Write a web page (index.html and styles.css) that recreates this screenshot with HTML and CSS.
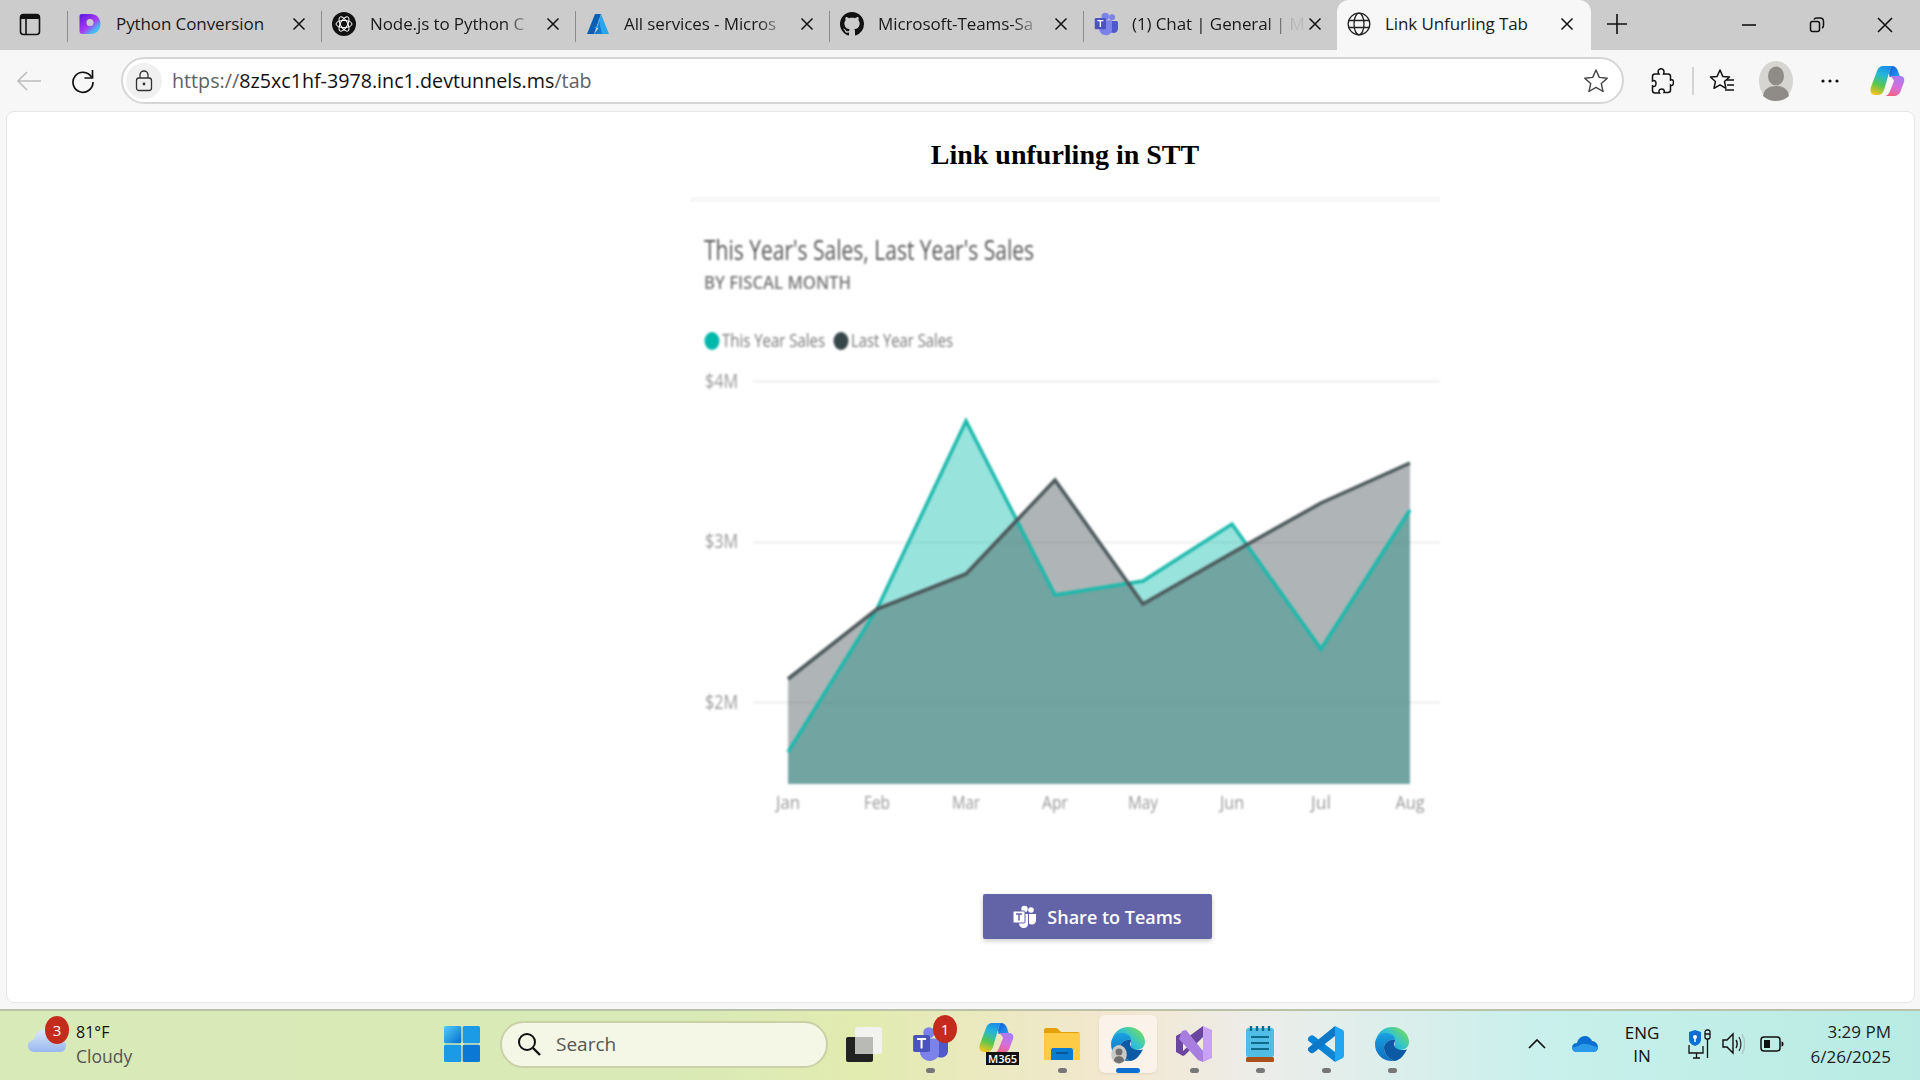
FILE: index.html
```html
<!doctype html>
<html lang="en">
<head>
  <meta charset="utf-8">
  <title>Link Unfurling Tab</title>
  <link rel="stylesheet" href="styles.css">
</head>
<body>
<svg class="sprite" width="0" height="0">
  <defs>
    <linearGradient id="edgeTop" x1="0" y1="1" x2="1" y2="0.3"><stop offset="0" stop-color="#0f8fd8"/><stop offset="0.6" stop-color="#33c3d0"/><stop offset="1" stop-color="#6fdc62"/></linearGradient>
    <linearGradient id="edgeBody" x1="0" y1="0" x2="0" y2="1"><stop offset="0" stop-color="#1a9fe0"/><stop offset="1" stop-color="#0c6fc0"/></linearGradient>
    <linearGradient id="copA" x1="0.6" y1="0" x2="0.3" y2="1"><stop offset="0" stop-color="#1c8fe8"/><stop offset="0.3" stop-color="#25b8d8"/><stop offset="0.65" stop-color="#56c650"/><stop offset="1" stop-color="#f0c420"/></linearGradient>
    <linearGradient id="copB" x1="0.8" y1="0" x2="0.3" y2="1"><stop offset="0" stop-color="#a77cf5"/><stop offset="0.55" stop-color="#d86ed8"/><stop offset="1" stop-color="#f2607a"/></linearGradient>
    <linearGradient id="copC" x1="0" y1="0" x2="1" y2="1"><stop offset="0" stop-color="#0e5fd8"/><stop offset="1" stop-color="#2a9cf0"/></linearGradient>
    <linearGradient id="winBlue" x1="0" y1="0" x2="1" y2="1"><stop offset="0" stop-color="#54cbfa"/><stop offset="1" stop-color="#0070cc"/></linearGradient>
    <symbol id="close" viewBox="0 0 14 14"><path d="M1.500 1.500l11 11M12.500 1.500l-11 11" fill="none" stroke="#111" stroke-width="1.500"/></symbol>
    <symbol id="edge" viewBox="0 0 36 36">
      <path d="M2 13C5 5 11 1 18 1c10 0 17 7 17 15 0 5-4 8-9 8-3 0-6-1-6-3 0-1 1-2 1-4 0-5-4-8-9-8-4 0-8 1-10 4z" fill="url(#edgeTop)"/>
      <path d="M1 18C1 11 7 7 12 7c5 0 9 3 9 7-5-1-11 2-11 8 0 6 5 11 10 13C9 36 1 28 1 18z" fill="url(#edgeBody)"/>
      <path d="M10 22c0-6 6-9 11-8 0 2-1 3-1 4 0 4 4 6 9 6 2 0 3-.4 4-1-3 7-8 12-13 12-5-2-10-7-10-13z" fill="#0c59a4"/>
    </symbol>
    <symbol id="copilot" viewBox="0 0 36 32">
      <path d="M24 1h-9C11 1 9 3 8 6L2 22c-1.500 4 0 8 4 8h3c3 0 5-2 6-5L20 8c1-4 2-7 4-7z" fill="url(#copA)"/>
      <path d="M23 1c3 0 5 2 6 5l2 6h-10.500L20 8c1-4 2-7 3-7z" fill="url(#copC)"/>
      <path d="M21 11h10c3 0 5 2 4 6l-3 8c-1 4-4 6-7 6H15c3 0 5-2 6-5l4-10c-1-2-2-4-4-5z" fill="url(#copB)"/>
    </symbol>
    <symbol id="teams" viewBox="0 0 32 32">
      <circle cx="24" cy="7" r="4" fill="#7b83eb"/>
      <path d="M19 12h11c1 0 2 1 2 2v8c0 4-3 6-6 6-2 0-5-1-7-3z" fill="#5059c9"/>
      <circle cx="15" cy="6" r="5" fill="#7b83eb"/>
      <path d="M7 11h16c1 0 1 1 1 2v11c0 4-4 7-8 7-5 0-9-4-9-8z" fill="#7b83eb"/>
      <rect x="1" y="8" width="15" height="15" rx="1.500" fill="#4b53bc"/>
      <path d="M4.500 11.500h8M8.500 11.500v8.500" stroke="#fff" stroke-width="1.800" fill="none"/>
    </symbol>
  </defs>
</svg>

<!-- browser tab strip -->
<div class="tabstrip">
  <div class="sidebar-btn">
    <svg width="24" height="24" viewBox="0 0 24 24"><rect x="2.500" y="2.500" width="19" height="20" rx="3" fill="none" stroke="#111" stroke-width="1.600"/><path d="M2.500 7h19v-2c0-2-1-2.500-3-2.500h-13c-2 0-3 .5-3 2.500z" fill="#111"/><path d="M8 7v15" stroke="#111" stroke-width="1.600"/></svg>
  </div>
  <div class="tab">
    <svg class="favicon" viewBox="-1.500 -2 24 24"><defs><linearGradient id="perp" x1="0" y1="0" x2="0.9" y2="1"><stop offset="0" stop-color="#5a14e0"/><stop offset="0.55" stop-color="#a63cf2"/><stop offset="0.8" stop-color="#4fb4f2"/><stop offset="1" stop-color="#35d0e8"/></linearGradient></defs><path fill-rule="evenodd" d="M2 0h9c6 0 10 4 10 10s-4 10-10 10H3c-2 0-3-1-3-3V2c0-1 1-2 2-2zM10.500 5a3.500 3.500 0 1 0 0 7 3.500 3.500 0 0 0 0-7z" fill="url(#perp)"/></svg>
    <span class="tab-title">Python Conversion</span>
    <svg class="tab-close"><use href="#close"/></svg>
  </div>
  <div class="tab">
    <svg class="favicon" viewBox="0 0 24 24"><circle cx="12" cy="12" r="12" fill="#111"/><g fill="none" stroke="#fff" stroke-width="1"><ellipse cx="12" cy="12" rx="8" ry="3.600"/><ellipse cx="12" cy="12" rx="8" ry="3.600" transform="rotate(60 12 12)"/><ellipse cx="12" cy="12" rx="8" ry="3.600" transform="rotate(120 12 12)"/></g></svg>
    <span class="tab-title fade">Node.js to Python C</span>
    <svg class="tab-close"><use href="#close"/></svg>
  </div>
  <div class="tab">
    <svg class="favicon" viewBox="0 0 24 24"><path d="M9 2h6L8 22H1z" fill="#0a5fb4"/><path d="M15 2l8 20h-7l-4-6h-4l4-3z" fill="#2aa4ec"/><path d="M13 9l3 13h-8l4-5z" fill="#1278d0"/></svg>
    <span class="tab-title fade">All services - Micros</span>
    <svg class="tab-close"><use href="#close"/></svg>
  </div>
  <div class="tab">
    <svg class="favicon" viewBox="0 0 16 16"><path fill="#111" d="M8 0C3.580 0 0 3.580 0 8c0 3.540 2.290 6.530 5.470 7.590.4.070.55-.17.55-.38 0-.19-.01-.82-.01-1.490-2.010.37-2.530-.49-2.690-.94-.09-.23-.48-.94-.82-1.130-.28-.15-.68-.52-.01-.53.63-.01 1.080.58 1.230.82.72 1.210 1.870.87 2.330.66.07-.52.28-.87.51-1.070-1.780-.2-3.640-.89-3.640-3.950 0-.87.31-1.590.82-2.150-.08-.2-.36-1.020.08-2.120 0 0 .67-.21 2.200.82.64-.18 1.320-.27 2-.27.68 0 1.360.09 2 .27 1.530-1.040 2.200-.82 2.200-.82.44 1.100.16 1.920.08 2.120.51.56.82 1.270.82 2.150 0 3.070-1.870 3.750-3.650 3.950.29.25.54.73.54 1.480 0 1.070-.01 1.930-.01 2.200 0 .21.15.46.55.38A8.013 8.013 0 0016 8c0-4.420-3.580-8-8-8z"/></svg>
    <span class="tab-title fade">Microsoft-Teams-Sa</span>
    <svg class="tab-close"><use href="#close"/></svg>
  </div>
  <div class="tab">
    <svg class="favicon"><use href="#teams"/></svg>
    <span class="tab-title fade">(1) Chat | General | M</span>
    <svg class="tab-close"><use href="#close"/></svg>
  </div>
  <div class="tab active">
    <svg class="favicon" viewBox="0 0 24 24"><g fill="none" stroke="#222" stroke-width="1.300"><circle cx="12" cy="12" r="10.800"/><ellipse cx="12" cy="12" rx="5" ry="10.800"/><path d="M1.500 8.500h21M1.500 15.500h21"/></g></svg>
    <span class="tab-title">Link Unfurling Tab</span>
    <svg class="tab-close"><use href="#close"/></svg>
  </div>
  <div class="newtab">
    <svg width="22" height="22" viewBox="0 0 22 22"><path d="M11 1v20M1 11h20" stroke="#111" stroke-width="1.600"/></svg>
  </div>
  <div class="winctl">
    <span><svg width="16" height="16" viewBox="0 0 16 16"><path d="M1 8h14" stroke="#111" stroke-width="1.600"/></svg></span>
    <span><svg width="16" height="16" viewBox="0 0 16 16"><rect x="1.500" y="4.500" width="9" height="10" rx="2" fill="none" stroke="#111" stroke-width="1.500"/><path d="M5 2.500c.5-1 1-1.500 2.500-1.500h3.500c2 0 3.500 1.500 3.500 3.500v4c0 1.500-.5 2-1.500 2.500" fill="none" stroke="#111" stroke-width="1.500"/></svg></span>
    <span><svg width="16" height="16" viewBox="0 0 16 16"><path d="M1 1l14 14M15 1L1 15" stroke="#111" stroke-width="1.600"/></svg></span>
  </div>
</div>

<!-- address bar row -->
<div class="toolbar">
  <div class="tool back">
    <svg width="26" height="22" viewBox="0 0 26 22"><path d="M25 11H2M11 2l-9 9 9 9" fill="none" stroke="#bdbdbd" stroke-width="1.600"/></svg>
  </div>
  <div class="tool reload">
    <svg width="26" height="26" viewBox="0 0 26 26"><path d="M21.500 9A10 10 0 1 0 23 14" fill="none" stroke="#111" stroke-width="1.700"/><path d="M22.500 2v8h-8" fill="none" stroke="#111" stroke-width="1.700"/></svg>
  </div>
  <div class="address">
    <span class="lock-pill">
      <svg width="18" height="22" viewBox="0 0 18 22"><rect x="1.500" y="8" width="15" height="12.500" rx="2.500" fill="none" stroke="#333" stroke-width="1.300"/><path d="M5 8V5c0-2.500 2-4 4-4s4 1.500 4 4v3" fill="none" stroke="#333" stroke-width="1.300"/><circle cx="9" cy="14" r="1.400" fill="#333"/></svg>
    </span>
    <span class="url"><span class="url-dim">https://</span>8z5xc1hf-3978.inc1.devtunnels.ms<span class="url-dim">/tab</span></span>
    <svg class="addr-star" width="26" height="26" viewBox="0 0 26 26"><path d="M13 2l3.300 7.400 8 .8-6 5.400 1.700 7.900-7-4.100-7 4.100 1.700-7.900-6-5.400 8-.8z" fill="none" stroke="#444" stroke-width="1.400" stroke-linejoin="round"/></svg>
  </div>
  <div class="tools">
    <div class="tool">
      <svg width="24" height="28" viewBox="0 0 24 28"><path d="M9 2.500c2-1.500 5-.5 5 2 0 1 0 1.500-.5 2.500H18c1.500 0 2.500 1 2.500 2.500V13c1.500-.8 3-.3 3 2.500s-1.500 3.500-3 2.500v5c0 1.500-1 2.500-2.500 2.500h-4c.7-2 0-3.500-2.500-3.500S8.500 24 9.500 26H5c-1.500 0-2.500-1-2.500-2.500V19c2 1 3.500 0 3.500-2.500S4.500 13 2.500 14V9.500C2.500 8 3.500 7 5 7h4c-1-1.500-1-3.500 0-4.500z" fill="none" stroke="#111" stroke-width="1.500"/></svg>
    </div>
    <i class="tool-sep"></i>
    <div class="tool favs">
      <svg width="26" height="26" viewBox="0 0 26 26"><path d="M11 2l2.800 6.400 6.700.6-5 4.500 1.400 6.800-5.900-3.500L5 20.300l1.400-6.800-5-4.500 6.700-.6z" fill="none" stroke="#111" stroke-width="1.500" stroke-linejoin="round"/><path d="M17 12h8M18 17h7M16 22h9" stroke="#111" stroke-width="1.500"/></svg>
    </div>
    <div class="tool">
      <svg width="34" height="40" viewBox="0 0 34 40"><ellipse cx="17" cy="20" rx="17" ry="20" fill="#d6d5d1"/><ellipse cx="17" cy="15" rx="8" ry="9.500" fill="#8f8c87"/><path d="M4 35c1-7 6-10 13-10s12 3 13 10c-3 3-8 5-13 5s-10-2-13-5z" fill="#8f8c87"/></svg>
    </div>
    <div class="tool">
      <svg width="20" height="6" viewBox="0 0 20 6"><circle cx="3" cy="3" r="1.600" fill="#111"/><circle cx="10" cy="3" r="1.600" fill="#111"/><circle cx="17" cy="3" r="1.600" fill="#111"/></svg>
    </div>
    <div class="tool copilot-btn">
      <svg width="36" height="32"><use href="#copilot"/></svg>
    </div>
  </div>
</div>

<main class="page">
  <div class="content">
    <h1>Link unfurling in STT</h1>
    <hr class="divider">
    <svg class="chart" width="750" height="610" viewBox="690 205 750 610">
      <text class="chart-title" x="704" y="260" textLength="330" lengthAdjust="spacingAndGlyphs">This Year's Sales, Last Year's Sales</text>
      <text class="chart-sub" x="704" y="289" textLength="147" lengthAdjust="spacingAndGlyphs">BY FISCAL MONTH</text>

      <ellipse cx="712" cy="341" rx="7.500" ry="9" fill="#01b8aa"/>
      <text class="chart-legend" x="722" y="347" textLength="103" lengthAdjust="spacingAndGlyphs">This Year Sales</text>
      <ellipse cx="841" cy="341" rx="7.500" ry="9" fill="#374649"/>
      <text class="chart-legend" x="851" y="347" textLength="102" lengthAdjust="spacingAndGlyphs">Last Year Sales</text>

      <path class="gridline" d="M753 381.500H1440M753 542.500H1440M753 702.500H1440"/>
      <text class="chart-axis" x="705" y="388" textLength="33" lengthAdjust="spacingAndGlyphs">$4M</text>
      <text class="chart-axis" x="705" y="548" textLength="33" lengthAdjust="spacingAndGlyphs">$3M</text>
      <text class="chart-axis" x="705" y="709" textLength="33" lengthAdjust="spacingAndGlyphs">$2M</text>

      <polygon class="area-teal" points="788,752 877,609 966,421 1055,595 1143,581 1232,524 1321,649 1410,510 1410,784 788,784"/>
      <polygon class="area-dark" points="788,679 877,609 966,574 1055,480 1143,604 1232,553 1321,503 1410,463 1410,784 788,784"/>
      <polyline class="line-teal" points="788,752 877,609 966,421 1055,595 1143,581 1232,524 1321,649 1410,510"/>
      <polyline class="line-dark" points="788,679 877,609 966,574 1055,480 1143,604 1232,553 1321,503 1410,463"/>

      <g class="chart-months">
        <text x="788" y="809" textLength="24" lengthAdjust="spacingAndGlyphs">Jan</text>
        <text x="877" y="809" textLength="26" lengthAdjust="spacingAndGlyphs">Feb</text>
        <text x="966" y="809" textLength="28" lengthAdjust="spacingAndGlyphs">Mar</text>
        <text x="1055" y="809" textLength="26" lengthAdjust="spacingAndGlyphs">Apr</text>
        <text x="1143" y="809" textLength="30" lengthAdjust="spacingAndGlyphs">May</text>
        <text x="1232" y="809" textLength="24" lengthAdjust="spacingAndGlyphs">Jun</text>
        <text x="1321" y="809" textLength="20" lengthAdjust="spacingAndGlyphs">Jul</text>
        <text x="1410" y="809" textLength="29" lengthAdjust="spacingAndGlyphs">Aug</text>
      </g>
    </svg>
    <button class="share-btn">
      <svg width="24" height="24" viewBox="0 0 24 24"><circle cx="18" cy="5" r="2.800" fill="#fff"/><circle cx="11.500" cy="4" r="3.200" fill="#fff"/><path d="M16 9h7v6c0 3-2 4.500-4 4.500-1 0-2-.3-3-1z" fill="#fff"/><path d="M6 9h9v10c0 2.500-2 4-4 4-3 0-5-2-5-5z" fill="#fff"/><rect x="0" y="6" width="12" height="12" rx="1" fill="#fff" stroke="#6264a7" stroke-width="1"/><path d="M3 9h6M6 9v6.500" stroke="#6264a7" stroke-width="1.500"/></svg>
      Share to Teams
    </button>
  </div>
</main>

<!-- windows taskbar -->
<footer class="taskbar">
  <div class="weather">
    <div class="weather-icon">
      <svg width="40" height="32" viewBox="0 0 40 32"><defs><linearGradient id="cloudFill" x1="0" y1="0" x2="0" y2="1"><stop offset="0" stop-color="#dfe9fb"/><stop offset="1" stop-color="#98b8f0"/></linearGradient></defs><path d="M8 31C3 31 1 28 1 24.500S4 19 7 18.500C8 12 13 8 20 8c8 0 13 4 14 10 3 1 5 3 5 6.500S37 31 33 31z" fill="url(#cloudFill)"/></svg>
      <span class="count-badge weather-badge">3</span>
    </div>
    <div class="weather-text">
      <span class="temp">81°F</span>
      <span class="cond">Cloudy</span>
    </div>
  </div>

  <div class="taskbtn">
    <svg width="36" height="36" viewBox="0 0 36 36"><rect x="0" y="0" width="17.300" height="17.300" rx="1.500" fill="url(#winBlue)"/><rect x="18.700" y="0" width="17.300" height="17.300" rx="1.500" fill="#1b9be6"/><rect x="0" y="18.700" width="17.300" height="17.300" rx="1.500" fill="#1b9be6"/><rect x="18.700" y="18.700" width="17.300" height="17.300" rx="1.500" fill="#0a78d4"/></svg>
  </div>
  <div class="searchbox">
    <svg width="24" height="24" viewBox="0 0 24 24"><circle cx="10" cy="10" r="8" fill="none" stroke="#111" stroke-width="2"/><path d="M16 16l7 7" stroke="#111" stroke-width="2.400"/></svg>
    <span>Search</span>
  </div>

  <div class="taskbtn">
    <svg width="36" height="36" viewBox="0 0 36 36"><rect x="0" y="11" width="27" height="25" rx="2" fill="#222"/><rect x="9" y="1" width="27" height="27" rx="2" fill="#f2f2ee"/><rect x="9" y="11" width="18" height="17" fill="#b9b9b5"/></svg>
  </div>
  <div class="taskbtn running">
    <svg width="36" height="36"><use href="#teams"/></svg>
    <span class="count-badge teams-badge">1</span>
  </div>
  <div class="taskbtn">
    <svg class="m365-logo" width="36" height="32"><use href="#copilot"/></svg>
    <span class="m365">M365</span>
  </div>
  <div class="taskbtn running">
    <svg width="36" height="34" viewBox="0 0 36 34"><path d="M0 3c0-1 1-2 2-2h9c1 0 2 0 3 1l3 3h17c1 0 2 1 2 2v2H0z" fill="#e3a008"/><path d="M0 6h36v27H0z" fill="#fdcb45"/><path d="M7 33V23c0-1 1-2 2-2h18c1 0 2 1 2 2v10z" fill="#0a7cd0"/><path d="M12 26h12" stroke="#064f8c" stroke-width="1.600"/></svg>
  </div>
  <div class="taskbtn active">
    <svg width="36" height="36"><use href="#edge"/></svg>
    <svg class="edge-avatar" width="16" height="19" viewBox="0 0 18 22"><ellipse cx="9" cy="11" rx="9" ry="11" fill="#c9c9c6"/><circle cx="9" cy="8" r="4" fill="#707070"/><path d="M3 18c1-4 3-5 6-5s5 1 6 5c-2 2-4 3-6 3s-4-1-6-3z" fill="#707070"/></svg>
  </div>
  <div class="taskbtn running">
    <svg width="36" height="36" viewBox="0 0 36 36"><path d="M27 0l9 4v28l-9 4z" fill="#c9a2f7"/><path d="M27 0v11L9 29l-2 1-7-4V10l7-4 5 5z" fill="#6a469f"/><path d="M7 12v13l7-6.500z" fill="#f0ebe4"/><path d="M6 5l4-1 17 21v11l-5-2L3 13z" fill="#a77ee0"/></svg>
  </div>
  <div class="taskbtn running">
    <svg width="28" height="36" viewBox="0 0 28 36"><rect x="0" y="31" width="28" height="5" rx="1.500" fill="#a8511a"/><rect x="0" y="2" width="28" height="29" rx="2.500" fill="#52bde4"/><path d="M5 0v5M11 0v5M17 0v5M23 0v5" stroke="#0e6b8c" stroke-width="2.400"/><path d="M5 11h18M5 17h18M5 23h18" stroke="#0e6b8c" stroke-width="2"/></svg>
  </div>
  <div class="taskbtn running">
    <svg width="36" height="36" viewBox="0 0 36 36"><path d="M2 10l-2 2v2.500L27 36V26L6 10c-1.500-1-3-1-4 0z" fill="#0a85d6"/><path d="M27 0v10L6 26.500c-1.500 1-3 1-4 0l-2-2V22z" fill="#0e78c8"/><path d="M27 0l7 3.500c1.500.7 2 1.500 2 3.500v22c0 2-.5 2.800-2 3.500L27 36z" fill="#22a6f2"/></svg>
  </div>
  <div class="taskbtn running">
    <svg width="36" height="36"><use href="#edge"/></svg>
  </div>

  <div class="tray">
    <div class="tray-item w-chevron">
      <svg width="18" height="10" viewBox="0 0 18 10"><path d="M1 9l8-8 8 8" fill="none" stroke="#111" stroke-width="1.700"/></svg>
    </div>
    <div class="tray-item w-cloud">
      <svg width="26" height="18" viewBox="0 0 26 18"><path d="M5 17c-3 0-5-2-5-4.500S2 8 5 8c1-4 4-7 8-7 3 0 6 2 7 5 3 0 6 3 6 6s-2 5-5 5z" fill="#0a6fd0"/><path d="M5 17c-3 0-5-2-5-4.500 2 0 6-1 9-3 3-2 8 0 17 3 0 2-2 4.500-5 4.500z" fill="#2a9ae8"/></svg>
    </div>
    <div class="tray-item lang">
      <span>ENG</span>
      <span>IN</span>
    </div>
    <div class="tray-item w-net">
      <svg width="24" height="30" viewBox="0 0 24 30"><path d="M1 16V24h14v-7M5 29h7M8.500 24v5" fill="none" stroke="#111" stroke-width="1.300"/><path d="M7 1l6 2v7c0 4-3 6-6 7-3-1-6-3-6-7V3z" fill="#0a6fd0"/><circle cx="7" cy="8" r="2" fill="#fff"/><path d="M7 9v4" stroke="#fff" stroke-width="1.500"/><rect x="17" y="1" width="5" height="9" rx="2" fill="none" stroke="#111" stroke-width="1.300"/><path d="M17 5h5M19.500 10v19" stroke="#111" stroke-width="1.300"/></svg>
    </div>
    <div class="tray-item w-vol">
      <svg width="24" height="24" viewBox="0 0 24 24"><path d="M2 8v7h4l6 6V2L6 8z" fill="none" stroke="#111" stroke-width="1.400"/><path d="M15 8c1.500 2 1.500 6 0 8" fill="none" stroke="#111" stroke-width="1.400"/><path d="M18 5c2.500 4 2.500 10 0 14" fill="none" stroke="#333" stroke-width="1.300"/><path d="M21 2c3.500 6 3.500 14 0 20" fill="none" stroke="#aac6c4" stroke-width="1.300"/></svg>
    </div>
    <div class="tray-item w-bat">
      <svg width="24" height="16" viewBox="0 0 24 16"><rect x="1" y="1" width="19" height="14" rx="3" fill="none" stroke="#111" stroke-width="1.500"/><rect x="4" y="4" width="6" height="8" fill="#111"/><path d="M21.500 5.500c1.500 0 2 1 2 2.500s-.5 2.500-2 2.500z" fill="#111"/></svg>
    </div>
    <div class="clock">
      <span>3:29 PM</span>
      <span>6/26/2025</span>
    </div>
  </div>
</footer>
</body>
</html>
```

FILE: styles.css
```css
* {
  box-sizing: border-box;
  margin: 0;
  padding: 0;
}
body {
  width: 1920px;
  height: 1080px;
  display: flex;
  flex-direction: column;
  overflow: hidden;
  background: #f7f7f7;
  font-family: 'Open Sans', sans-serif;
  color: #111;
}
svg {
  display: block;
  flex-shrink: 0;
}
.sprite {
  width: 0;
  height: 0;
}

/* tab strip */
.tabstrip {
  height: 50px;
  background: #cccccc;
  display: flex;
  align-items: flex-start;
}
.sidebar-btn {
  width: 67px;
  height: 50px;
  padding-left: 18px;
  padding-top: 12px;
}
.tab {
  width: 254px;
  height: 31px;
  margin-top: 11px;
  padding: 0 15px 6px 10px;
  border-left: 1px solid #8c8c8c;
  display: flex;
  align-items: center;
}
.tab.active {
  height: 50px;
  margin-top: 0;
  padding: 0 17px 3px 10px;
  border-left: 0;
  border-radius: 12px 12px 0 0;
  background: #f7f7f7;
}
.favicon {
  width: 24px;
  height: 24px;
}
.tab-title {
  width: 172px;
  margin-left: 14px;
  margin-right: auto;
  font-size: 17px;
  letter-spacing: -0.1px;
  white-space: nowrap;
  overflow: hidden;
  color: #1a1a1a;
}
.tab-title.fade {
  -webkit-mask-image: linear-gradient(to right, #000 78%, rgba(0,0,0,0.1) 94%);
  mask-image: linear-gradient(to right, #000 78%, rgba(0,0,0,0.1) 94%);
}
.tab-close {
  width: 14px;
  height: 14px;
}
.newtab {
  width: 52px;
  height: 50px;
  padding: 13px 0 0 15px;
}
.winctl {
  margin-left: auto;
  margin-right: 1px;
  display: flex;
}
.winctl span {
  width: 68px;
  height: 50px;
  display: flex;
  align-items: center;
  justify-content: center;
}

/* toolbar */
.toolbar {
  height: 61px;
  padding-left: 7px;
  display: flex;
  align-items: center;
}
.tool {
  width: 44px;
  height: 44px;
  display: flex;
  align-items: center;
  justify-content: center;
}
.reload {
  margin-left: 10px;
}
.address {
  width: 1503px;
  height: 47px;
  margin-left: 16px;
  padding: 0 13px 0 3px;
  background: #fff;
  border: 2px solid #d6d6d6;
  border-radius: 24px;
  display: flex;
  align-items: center;
}
.lock-pill {
  width: 36px;
  height: 36px;
  border-radius: 50%;
  background: #f0f0f0;
  display: flex;
  align-items: center;
  justify-content: center;
}
.url {
  margin-left: 10px;
  font-size: 19.7px;
  color: #111;
}
.url-dim {
  color: #5f5f5f;
}
.addr-star {
  margin-left: auto;
}
.tools {
  margin-left: 16px;
  display: flex;
  align-items: center;
  gap: 10px;
}
.tool-sep {
  width: 2px;
  height: 28px;
  margin: 0 -2px;
  background: #d4d4d4;
}
.favs {
  margin-left: -2px;
}
.copilot-btn {
  margin-left: 3px;
}

/* page */
.page {
  height: 892px;
  margin: 0 5px 6px 6px;
  background: #fff;
  border: 1px solid #e6e6e6;
  border-radius: 8px;
}
.content {
  width: 750px;
  margin-left: 683px;
  padding-top: 25px;
  display: flex;
  flex-direction: column;
}
h1 {
  font-family: 'Liberation Serif', serif;
  font-size: 28px;
  font-weight: 700;
  line-height: 36px;
  text-align: center;
  color: #000;
}
.divider {
  height: 5px;
  margin-top: 24px;
  border: 0;
  background: #f9f8f6;
}
.chart {
  margin-top: 3px;
  filter: blur(1px);
}
.chart text {
  font-family: 'Open Sans', sans-serif;
}
.chart-title {
  font-size: 28px;
  fill: #555;
}
.chart-sub {
  font-size: 18px;
  font-weight: 600;
  fill: #777;
}
.chart-legend {
  font-size: 19px;
  fill: #777;
}
.chart-axis {
  font-size: 20px;
  fill: #999;
}
.chart-months text {
  font-size: 19px;
  fill: #999;
  text-anchor: middle;
}
.gridline {
  fill: none;
  stroke: #eeeeee;
  stroke-width: 2;
}
.area-teal {
  fill: #01b8aa;
  fill-opacity: 0.4;
}
.area-dark {
  fill: #374649;
  fill-opacity: 0.4;
}
.line-teal,
.line-dark {
  fill: none;
  stroke-width: 3.5;
}
.line-teal {
  stroke: #1cb9ac;
}
.line-dark {
  stroke: #4a5759;
}
.share-btn {
  width: 229px;
  height: 45px;
  margin-top: 79px;
  margin-left: 293px;
  border: 0;
  border-radius: 2px;
  background: #6264a7;
  color: #fff;
  font-family: 'Open Sans', sans-serif;
  font-size: 18px;
  font-weight: 600;
  box-shadow: 0 2px 5px rgba(0,0,0,0.2);
  display: flex;
  align-items: center;
  justify-content: center;
  gap: 10px;
}

/* taskbar */
.taskbar {
  height: 71px;
  padding-bottom: 3px;
  border-top: 2px solid #b9c2a8;
  background: linear-gradient(to right, #d8eab8 0%, #d9eab6 35%, #e2ebb0 45%, #f3e7d0 58%, #ecedea 66%, #c9f0ec 80%, #b8ebe3 100%);
  display: flex;
  align-items: center;
}
.weather {
  width: 429px;
  padding-left: 27px;
  display: flex;
  align-items: center;
  gap: 9px;
}
.weather-icon {
  position: relative;
  width: 40px;
  height: 32px;
  margin-bottom: 15px;
}
.count-badge {
  position: absolute;
  width: 24px;
  height: 28px;
  border-radius: 50%;
  background: #c42b1c;
  color: #fff;
  font-size: 15px;
  line-height: 28px;
  text-align: center;
}
.weather-badge {
  top: -5px;
  left: 18px;
}
.weather-text {
  display: flex;
  flex-direction: column;
  line-height: 24px;
}
.temp {
  font-size: 16px;
  color: #111;
}
.cond {
  font-size: 17.5px;
  color: #555;
}
.taskbtn {
  position: relative;
  width: 66px;
  height: 63px;
  border-radius: 6px;
  display: flex;
  align-items: center;
  justify-content: center;
}
.taskbtn.active {
  width: 58px;
  height: 58px;
  margin: 0 4px;
  background: #fbf3e9;
  box-shadow: 0 1px 2px rgba(0,0,0,0.08);
}
.taskbtn.running::after,
.taskbtn.active::after {
  content: '';
  position: absolute;
  left: 29px;
  bottom: 3px;
  width: 9px;
  height: 5px;
  border-radius: 3px;
  background: #777;
}
.taskbtn.active::after {
  left: 17px;
  bottom: 0;
  width: 24px;
  background: #0a6fd0;
}
.teams-badge {
  top: 2px;
  left: 36px;
}
.m365-logo {
  margin-top: -12px;
}
.m365 {
  position: absolute;
  left: 23px;
  top: 39px;
  padding: 0 2px;
  background: #111;
  color: #fff;
  font-size: 11px;
  font-weight: 600;
  line-height: 13px;
}
.edge-avatar {
  position: absolute;
  left: 12px;
  top: 30px;
}
.searchbox {
  width: 328px;
  height: 47px;
  margin: 0 3px 0 5px;
  padding-left: 15px;
  border: 2px solid #cbd0a8;
  border-radius: 24px;
  background: #f5f7e6;
  display: flex;
  align-items: center;
  gap: 15px;
  font-size: 19px;
  color: #555;
}
.tray {
  margin-left: auto;
  padding-right: 29px;
  display: flex;
  align-items: center;
}
.tray-item {
  display: flex;
  align-items: center;
  justify-content: center;
}
.w-chevron { width: 40px; }
.w-cloud { width: 56px; }
.w-net {
  width: 45px;
  padding-left: 12px;
}
.w-vol { width: 34px; }
.w-bat { width: 43px; }
.lang {
  width: 58px;
  flex-direction: column;
  font-size: 17px;
  line-height: 23px;
}
.clock {
  width: 98px;
  display: flex;
  flex-direction: column;
  align-items: flex-end;
  font-size: 17px;
  line-height: 25px;
  color: #222;
}
```
